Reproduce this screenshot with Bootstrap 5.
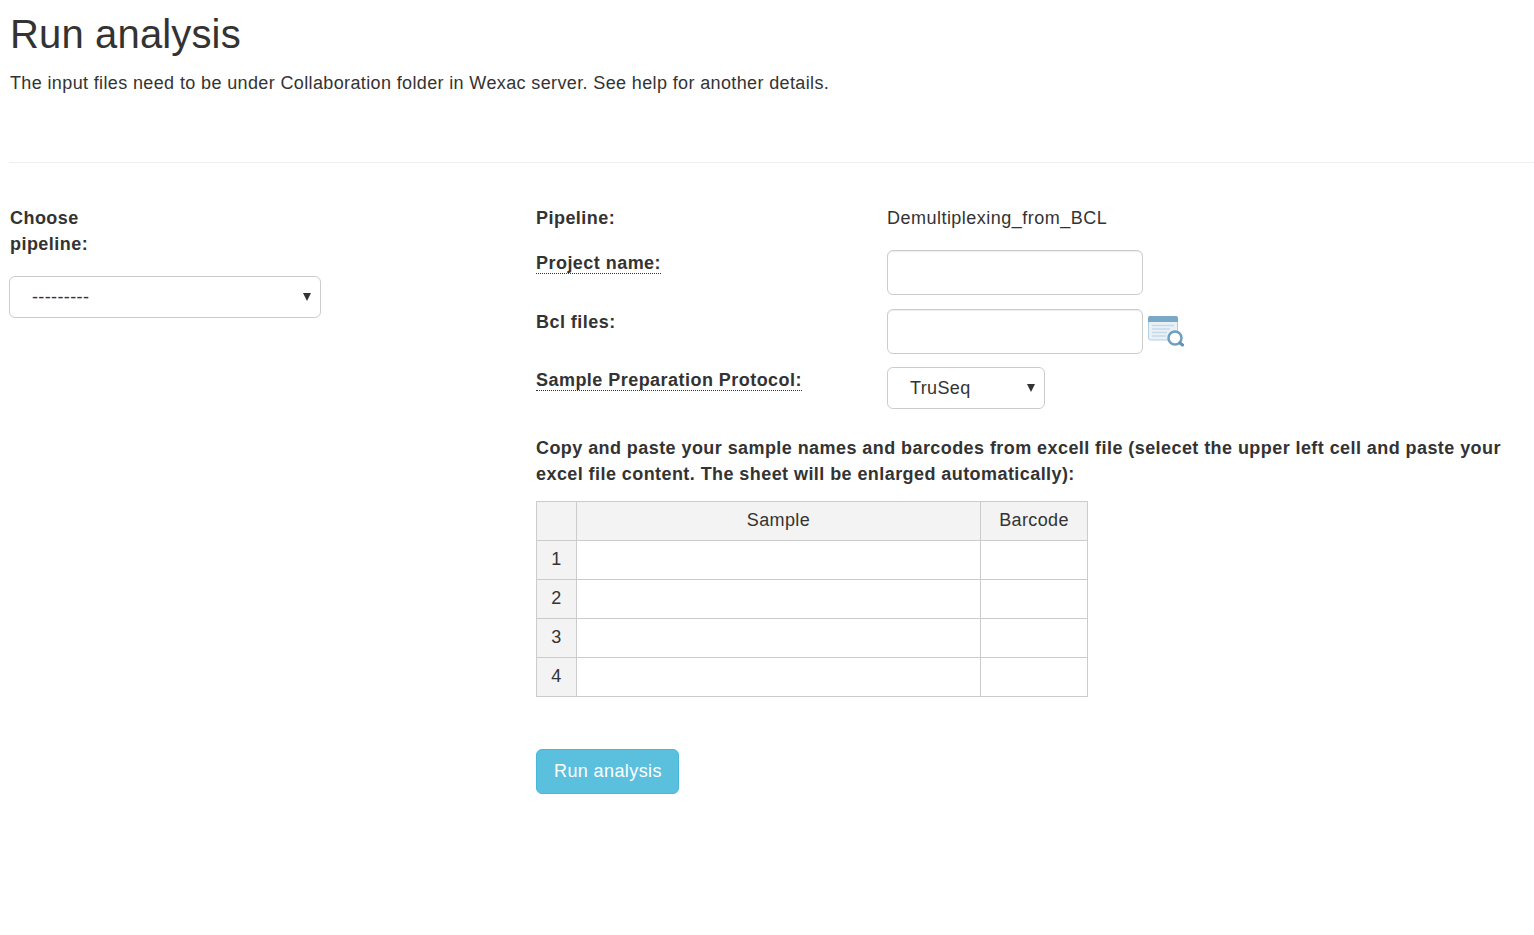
<!DOCTYPE html>
<html lang="en">
<head>
    <meta charset="UTF-8">
    <meta name="viewport" content="width=device-width, initial-scale=1.0">
    <title>Run analysis</title>
    <link href="https://cdn.jsdelivr.net/npm/bootstrap@5.3.0/dist/css/bootstrap.min.css" rel="stylesheet">
    <style>
        body {
            font-family: "Liberation Sans", Arial, sans-serif;
            font-size: 18px;
            line-height: 26px;
            letter-spacing: .37px;
            color: #333;
            background: #fff;
            padding-left: 10px;
        }
        .page-title {
            font-family: "Liberation Sans", Arial, sans-serif;
            font-size: 40px;
            font-weight: 500;
            line-height: 44px;
            letter-spacing: .15px;
            color: #333;
            margin: 12px 0 0;
        }
        .page-intro {
            margin: 14px 0 0;
            height: 92px;
        }
        .page-rule {
            margin: 0 0 0 -1px;
            border: 0;
            border-top: 1px solid #eee;
            opacity: 1;
        }
        .main-area {
            padding-top: 42px;
        }
        .side-col {
            width: 526px;
            flex: none;
        }
        .side-label {
            font-weight: 700;
            letter-spacing: .46px;
            width: 120px;
            margin-bottom: 21px;
        }
        .pick {
            font-size: 18px;
            line-height: 26px;
            letter-spacing: .37px;
            color: #333;
            height: 42px;
            padding: 7px 30px 7px 22px;
            border: 1px solid #ccc;
            border-radius: 6px;
            --bs-form-select-bg-img: url("data:image/svg+xml,%3csvg xmlns='http://www.w3.org/2000/svg' viewBox='0 0 8 8'%3e%3cpath fill='%23333' d='M0 0h8L4 8z'/%3e%3c/svg%3e");
            background-position: right 9px center;
            background-size: 8px 8px;
        }
        .pick-pipeline { width: 312px; margin: -2px 0 0 -1px; }
        .pick-protocol { width: 158px; }
        .field-row { display: flex; }
        .field-label {
            width: 351px;
            flex: none;
            font-weight: 700;
            letter-spacing: .46px;
        }
        .field-value { letter-spacing: .48px; }
        .hint-label { border-bottom: 1px dotted #333; }
        .text-box {
            width: 256px;
            height: 45px;
            border: 1px solid #ccc;
            border-radius: 6px;
            box-shadow: inset 0 1px 1px rgba(0, 0, 0, .075);
        }
        .browse-icon { margin: 6px 0 0 5px; }
        .sheet-note {
            font-weight: 700;
            letter-spacing: .43px;
            margin: 26px 0 14px;
        }
        .sheet {
            width: 551px;
            table-layout: fixed;
            border-collapse: collapse;
            margin: 0;
            color: #333;
        }
        .sheet th, .sheet td {
            height: 39px;
            padding: 0 0 2px;
            border: 1px solid #ccc;
            font-weight: 400;
            text-align: center;
            vertical-align: middle;
            background: #fff;
            color: #333;
            box-shadow: none;
        }
        .sheet th, .sheet td.row-no { background: #f3f3f3; }
        .go-btn {
            font-size: 18px;
            line-height: 26px;
            letter-spacing: .4px;
            height: 45px;
            padding: 7px 16px 9px 17px;
            margin-top: 52px;
            color: #fff;
            background: #5bc0de;
            border: 1px solid #46b8da;
            border-radius: 6px;
        }
    </style>
</head>
<body>
    <h1 class="page-title">Run analysis</h1>
    <p class="page-intro">The input files need to be under Collaboration folder in Wexac server. See help for another details.</p>
    <hr class="page-rule">

    <div class="d-flex main-area">
        <div class="side-col">
            <div class="side-label">Choose pipeline:</div>
            <select class="form-select pick pick-pipeline">
                <option>---------</option>
            </select>
        </div>

        <div class="flex-grow-1">
            <div class="field-row" style="height:45px">
                <div class="field-label">Pipeline:</div>
                <div class="field-value">Demultiplexing_from_BCL</div>
            </div>
            <div class="field-row" style="height:59px">
                <div class="field-label"><span class="hint-label">Project name:</span></div>
                <input type="text" class="form-control text-box">
            </div>
            <div class="field-row" style="height:58px">
                <div class="field-label">Bcl files:</div>
                <input type="text" class="form-control text-box">
                <svg class="browse-icon" width="36" height="32" viewBox="0 0 36 32">
                    <rect x="0.5" y="1.500" width="29" height="23.500" rx="2" fill="#e9f1f7" stroke="#b4cfe1"/>
                    <path d="M0 7V3a2 2 0 0 1 2-2h26a2 2 0 0 1 2 2v4z" fill="#7ba8c7"/>
                    <path d="M4 10.500h22M4 14h18M4 17.500h15M4 21h14" stroke="#c6d9e7" stroke-width="1.500"/>
                    <circle cx="27" cy="23" r="6.500" fill="#fff" stroke="#6f9fc0" stroke-width="2.500"/>
                    <path d="M32 28l2.500 2" stroke="#5f94b8" stroke-width="3" stroke-linecap="round"/>
                </svg>
            </div>
            <div class="field-row">
                <div class="field-label"><span class="hint-label">Sample Preparation Protocol:</span></div>
                <select class="form-select pick pick-protocol">
                    <option>TruSeq</option>
                </select>
            </div>

            <div class="sheet-note">Copy and paste your sample names and barcodes from excell file (selecet the upper left cell and paste your excel file content. The sheet will be enlarged automatically):</div>

            <table class="table sheet">
                <colgroup>
                    <col style="width:40px">
                    <col style="width:404px">
                    <col style="width:107px">
                </colgroup>
                <thead>
                    <tr><th></th><th>Sample</th><th>Barcode</th></tr>
                </thead>
                <tbody>
                    <tr><td class="row-no">1</td><td></td><td></td></tr>
                    <tr><td class="row-no">2</td><td></td><td></td></tr>
                    <tr><td class="row-no">3</td><td></td><td></td></tr>
                    <tr><td class="row-no">4</td><td></td><td></td></tr>
                </tbody>
            </table>

            <button type="button" class="btn go-btn">Run analysis</button>
        </div>
    </div>
    <script src="https://cdn.jsdelivr.net/npm/bootstrap@5.3.0/dist/js/bootstrap.bundle.min.js"></script>
</body>
</html>
